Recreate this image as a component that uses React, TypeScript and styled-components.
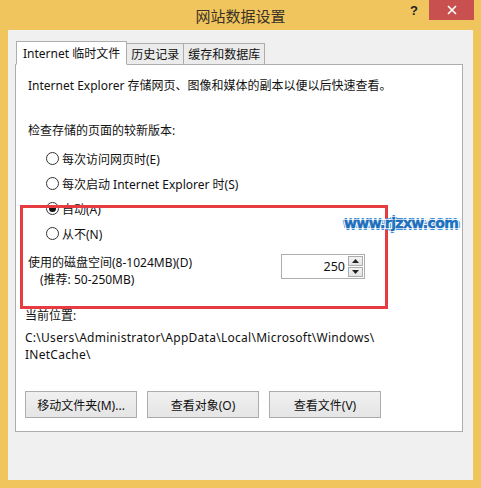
import React from "react";
import styled, { createGlobalStyle } from "styled-components";

const Global = createGlobalStyle`
  html, body { margin: 0; padding: 0; width: 481px; height: 488px; overflow: hidden; background: #f1c55e; }
  body { font-family: "Noto Sans", "Noto Sans CJK SC", sans-serif; font-size: 12px; color: #111; }
  * { box-sizing: border-box; }
`;

const Window = styled.div`
  position: relative;
  width: 481px;
  height: 488px;
  background: #f1c55e;
  display: flex;
  flex-direction: column;
`;

const TitleBar = styled.div`
  height: 30px;
  flex: none;
  position: relative;
  display: flex;
  align-items: center;
  justify-content: center;
`;

const Title = styled.div`
  font-family: "Noto Sans CJK SC", sans-serif;
  font-size: 15px;
  color: #3a3326;
`;

const TitleButtons = styled.div`
  position: absolute;
  top: 0;
  right: 7px;
  display: flex;
  align-items: flex-start;
`;

const HelpBtn = styled.div`
  width: 30px;
  height: 20px;
  display: flex;
  align-items: center;
  justify-content: center;
  font-family: "Liberation Sans", sans-serif;
  font-weight: bold;
  font-size: 13px;
  color: #222;
`;

const CloseBtn = styled.div`
  width: 45px;
  height: 20px;
  background: #c8504e;
  display: flex;
  align-items: center;
  justify-content: center;
`;

const Client = styled.div`
  flex: 1;
  margin: 0 8px 8px 8px;
  background: #f0f0f0;
  padding: 10px 10px 0 7px;
  display: flex;
  flex-direction: column;
`;

const TabStrip = styled.div`
  display: flex;
  align-items: flex-end;
  height: 24px;
  padding-left: 1px;
  position: relative;
  z-index: 2;
`;

const Tab = styled.div<{ $active?: boolean }>`
  height: ${(p) => (p.$active ? "24px" : "21px")};
  padding: 0 ${(p) => (p.$active ? "6px" : "4px")};
  margin-left: ${(p) => (p.$active ? "0" : "-1px")};
  background: ${(p) => (p.$active ? "#ffffff" : "#ebebeb")};
  border: 1px solid #adadad;
  border-bottom: ${(p) => (p.$active ? "1px solid #ffffff" : "none")};
  display: flex;
  align-items: center;
  white-space: nowrap;
  margin-bottom: ${(p) => (p.$active ? "-1px" : "0")};
  position: relative;
  z-index: ${(p) => (p.$active ? 2 : 1)};
`;

const Panel = styled.div`
  position: relative;
  width: 448px;
  height: 368px;
  background: #fff;
  border: 1px solid #adadad;
  padding: 12px 12px 14px 12px;
  display: flex;
  flex-direction: column;
`;

const Line = styled.div<{ $mt?: number; $ml?: number; $lh?: number }>`
  line-height: ${(p) => p.$lh ?? 18}px;
  white-space: nowrap;
  margin-top: ${(p) => p.$mt ?? 0}px;
  margin-left: ${(p) => p.$ml ?? 0}px;
`;

const RadioGroup = styled.div`
  margin-top: 6px;
  display: flex;
  flex-direction: column;
  padding-left: 18px;
`;

const RadioRow = styled.div`
  height: 25px;
  display: flex;
  align-items: center;
  gap: 3px;
  white-space: nowrap;
`;

const RadioCircle = styled.span<{ $checked?: boolean }>`
  width: 13px;
  height: 13px;
  border-radius: 50%;
  border: 1px solid #333;
  background: #fff;
  display: inline-flex;
  align-items: center;
  justify-content: center;
  flex: none;
  &::after {
    content: "";
    width: 7px;
    height: 7px;
    border-radius: 50%;
    background: ${(p) => (p.$checked ? "#111" : "transparent")};
  }
`;

const DiskRow = styled.div`
  margin-top: 8px;
  display: flex;
  align-items: flex-start;
  padding-right: 85px;
`;

const DiskText = styled.div`
  flex: 1;
  line-height: 17px;
`;

const Spinner = styled.div`
  width: 84px;
  height: 25px;
  border: 1px solid #abadb3;
  background: #fff;
  display: flex;
  align-items: stretch;
  padding: 1px;
`;

const SpinValue = styled.div`
  flex: 1;
  text-align: right;
  padding-right: 3px;
  line-height: 21px;
  font-size: 12.5px;
`;

const SpinButtons = styled.div`
  width: 15px;
  display: flex;
  flex-direction: column;
  gap: 1px;
`;

const SpinBtn = styled.div`
  flex: 1;
  background: linear-gradient(#f2f2f2, #e4e4e4);
  border: 1px solid #acacac;
  display: flex;
  align-items: center;
  justify-content: center;
`;

const PathBlock = styled.div`
  margin-top: 5px;
  margin-left: -3px;
  line-height: 17px;
  letter-spacing: 0.27px;
`;

const ButtonRow = styled.div`
  margin-top: 28px;
  margin-left: -3px;
  display: flex;
  gap: 10px;
`;

const Button = styled.div`
  width: 112px;
  height: 27px;
  border: 1px solid #acacac;
  background: linear-gradient(#f0f0f0, #e5e5e5);
  display: flex;
  align-items: center;
  justify-content: center;
  white-space: nowrap;
`;

const RedBox = styled.div`
  position: absolute;
  left: 4px;
  top: 140px;
  width: 368px;
  height: 104px;
  border: 3px solid #e53b41;
  pointer-events: none;
`;

const Watermark = styled.div`
  position: absolute;
  left: 344px;
  top: 215px;
  font-family: "DejaVu Sans", sans-serif;
  font-weight: bold;
  font-size: 14px;
  letter-spacing: -0.6px;
  color: #1d74c6;
  -webkit-text-stroke: 0.4px #0d5aa8;
  text-shadow:
    1px 0 0 #fff, -1px 0 0 #fff, 0 1px 0 #fff, 0 -1px 0 #fff,
    1px 1px 0 #fff, -1px -1px 0 #fff, 1px -1px 0 #fff, -1px 1px 0 #fff,
    2px 0 0 #3b8fd8, -2px 0 0 #3b8fd8, 0 2px 0 #3b8fd8, 0 -2px 0 #3b8fd8;
  white-space: nowrap;
`;

const Up = () => (
  <svg width="7" height="4" viewBox="0 0 7 4"><path d="M0 4 L3.5 0 L7 4 Z" fill="#222" /></svg>
);
const Down = () => (
  <svg width="7" height="4" viewBox="0 0 7 4"><path d="M0 0 L3.5 4 L7 0 Z" fill="#222" /></svg>
);

export default function App() {
  return (
    <>
      <Global />
      <Window>
        <TitleBar>
          <Title>网站数据设置</Title>
          <TitleButtons>
            <HelpBtn>?</HelpBtn>
            <CloseBtn>
              <svg width="10" height="10" viewBox="0 0 10 10">
                <path d="M1 1 L9 9 M9 1 L1 9" stroke="#fff" strokeWidth="1.6" />
              </svg>
            </CloseBtn>
          </TitleButtons>
        </TitleBar>
        <Client>
          <TabStrip>
            <Tab $active>Internet 临时文件</Tab>
            <Tab>历史记录</Tab>
            <Tab>缓存和数据库</Tab>
          </TabStrip>
          <Panel>
            <Line>Internet Explorer 存储网页、图像和媒体的副本以便以后快速查看。</Line>
            <Line $mt={27}>检查存储的页面的较新版本:</Line>
            <RadioGroup>
              <RadioRow><RadioCircle />每次访问网页时(E)</RadioRow>
              <RadioRow><RadioCircle />每次启动 Internet Explorer 时(S)</RadioRow>
              <RadioRow><RadioCircle $checked />自动(A)</RadioRow>
              <RadioRow><RadioCircle />从不(N)</RadioRow>
            </RadioGroup>
            <DiskRow>
              <DiskText>
                <div>使用的磁盘空间(8-1024MB)(D)</div>
                <Line $ml={12} $lh={17}>(推荐: 50-250MB)</Line>
              </DiskText>
              <Spinner>
                <SpinValue>250</SpinValue>
                <SpinButtons>
                  <SpinBtn><Up /></SpinBtn>
                  <SpinBtn><Down /></SpinBtn>
                </SpinButtons>
              </Spinner>
            </DiskRow>
            <Line $mt={19} $ml={-3} $lh={17}>当前位置:</Line>
            <PathBlock>
              <div>C:\Users\Administrator\AppData\Local\Microsoft\Windows\</div>
              <div>INetCache\</div>
            </PathBlock>
            <ButtonRow>
              <Button>移动文件夹(M)...</Button>
              <Button>查看对象(O)</Button>
              <Button>查看文件(V)</Button>
            </ButtonRow>
            <RedBox />
          </Panel>
        </Client>
        <Watermark>www.rjzxw.com</Watermark>
      </Window>
    </>
  );
}
